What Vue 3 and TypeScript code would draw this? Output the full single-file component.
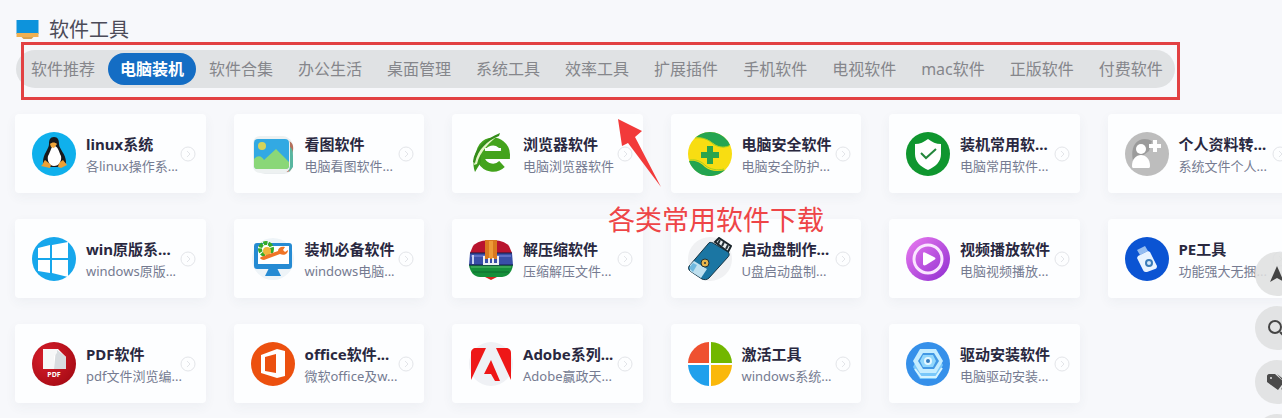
<script setup lang="ts">
import { ref } from 'vue'

interface Tool {
  icon: string
  title: string
  desc: string
}

const tabs: string[] = [
  '软件推荐', '电脑装机', '软件合集', '办公生活', '桌面管理', '系统工具', '效率工具',
  '扩展插件', '手机软件', '电视软件', 'mac软件', '正版软件', '付费软件',
]
const active = ref('电脑装机')

const tools: Tool[] = [
  { icon: 'linux', title: 'linux系统', desc: '各linux操作系...' },
  { icon: 'photo', title: '看图软件', desc: '电脑看图软件...' },
  { icon: 'browser', title: '浏览器软件', desc: '电脑浏览器软件' },
  { icon: 'safe', title: '电脑安全软件', desc: '电脑安全防护...' },
  { icon: 'shield', title: '装机常用软...', desc: '电脑常用软件...' },
  { icon: 'user', title: '个人资料转...', desc: '系统文件个人...' },
  { icon: 'windows', title: 'win原版系...', desc: 'windows原版...' },
  { icon: 'repair', title: '装机必备软件', desc: 'windows电脑...' },
  { icon: 'rar', title: '解压缩软件', desc: '压缩解压文件...' },
  { icon: 'usb', title: '启动盘制作...', desc: 'U盘启动盘制...' },
  { icon: 'video', title: '视频播放软件', desc: '电脑视频播放...' },
  { icon: 'pe', title: 'PE工具', desc: '功能强大无捆...' },
  { icon: 'pdf', title: 'PDF软件', desc: 'pdf文件浏览编...' },
  { icon: 'office', title: 'office软件...', desc: '微软office及w...' },
  { icon: 'adobe', title: 'Adobe系列...', desc: 'Adobe赢政天...' },
  { icon: 'activate', title: '激活工具', desc: 'windows系统...' },
  { icon: 'driver', title: '驱动安装软件', desc: '电脑驱动安装...' },
]
</script>

<template>
  <main class="page">
    <h1 class="heading">
      <svg class="heading-icon" viewBox="0 0 24 22" aria-hidden="true">
        <path d="M1 1h22v14H1z" fill="#0d93dc" />
        <path d="M1 14h22v4H1z" fill="#f0b052" />
        <path d="M6 18h12l-2 2H8z" fill="#d9a04d" />
      </svg>
      <span>软件工具</span>
    </h1>

    <nav class="tabs" aria-label="软件分类">
      <button
        v-for="tab in tabs"
        :key="tab"
        type="button"
        class="tab"
        :class="{ active: tab === active }"
        @click="active = tab"
      >{{ tab }}</button>
      <span class="frame" aria-hidden="true"></span>
    </nav>

    <section class="grid">
      <a v-for="tool in tools" :key="tool.title" href="#" class="card">
        <svg class="icon" viewBox="0 0 44 44" aria-hidden="true">
          <template v-if="tool.icon === 'linux'">
            <circle cx="22" cy="22" r="22" fill="#0fb0ec" />
            <path d="M22 5c-4 0-5 3-5 7 0 5-6 10-6 18 0 4 4 5 11 5s12-1 12-5c0-8-7-13-7-18 0-4-1-7-5-7z" fill="#17191d" />
            <path d="M22 14c-3 0-3 5-6 10-1 4 1 10 6 10s8-5 7-10c-2-4-3-10-7-10z" fill="#fff" />
            <path d="M18 12c2-2 5-2 7 0l-3 4-3-1z" fill="#f0a53a" />
            <path d="M13 28l6 5-1 3-9-2c2-1 2-4 4-6zM31 28l4 5-6 3-3-1 1-4z" fill="#eda035" />
          </template>
          <template v-else-if="tool.icon === 'photo'">
            <rect x="5" y="5" width="37" height="37" rx="9" fill="#e9edef" />
            <path d="M38 9c5 2 5 8 3 13v12c0 4-3 6-6 6z" fill="#b4705c" />
            <path d="M39 15c3 2 3 6 3 12v8l-4 5z" fill="#58b6a0" />
            <rect x="2" y="4" width="37" height="37" rx="7" fill="#edf1f1" />
            <rect x="3" y="7" width="35" height="30" rx="4" fill="#32a9e3" />
            <circle cx="11" cy="14" r="4" fill="#d6d45a" />
            <path d="M3 27c5-5 8-2 10 1L25 17l13 13v4a3 3 0 0 1-3 3H6a3 3 0 0 1-3-3z" fill="#8ad778" />
          </template>
          <template v-else-if="tool.icon === 'browser'">
            <path d="M12 23h25a13 13 0 1 0-4 9" fill="none" stroke="#43a31c" stroke-width="8" />
            <path d="M12 30l-6 10C3 32 4 22 12 14z" fill="#3b991b" />
            <path d="M5 33C7 18 17 8 31 2 21 10 11 19 8 32z" fill="#e3f6c4" />
            <path d="M4 30C5 17 16 7 31 1l-1 3C18 9 9 17 6 31z" fill="#348c1a" />
            <path d="M16 16h16v2H16z" fill="#fdfeff" />
          </template>
          <template v-else-if="tool.icon === 'safe'">
            <circle cx="22" cy="22" r="22" fill="#f8dd12" />
            <path d="M8 5A22 22 0 0 1 42 13c-6 4-12 2-17-2C20 7 14 6 8 5z" fill="#25a552" />
            <path d="M1 29c7-1 12 2 16 6 5 4 12 5 20 3A22 22 0 0 1 1 29z" fill="#23a450" />
            <path d="M7 6c7-1 13 1 18 6 5 3 10 4 16 2M2 28c7-1 12 2 16 6 4 3 11 5 18 3" fill="none" stroke="#a6cf20" stroke-width="1" />
            <path d="M19 14h6v6h6v6h-6v6h-6v-6h-6v-6h6z" fill="#28a44d" />
          </template>
          <template v-else-if="tool.icon === 'shield'">
            <circle cx="22" cy="22" r="22" fill="#0f962f" />
            <path d="M22 7c4 3 8 5 13 5v10c0 8-6 13-13 16C15 35 9 30 9 22V12c5 0 9-2 13-5z" fill="#fff" />
            <path d="M15 21l5 5 10-9" fill="none" stroke="#23863b" stroke-width="2" />
          </template>
          <template v-else-if="tool.icon === 'user'">
            <circle cx="22" cy="22" r="22" fill="#bdbdbd" />
            <path d="M10 12c4-6 12-6 17-3l-3 10-8 6-7 8c-2-7-3-15 1-21z" fill="#9b9b9b" />
            <circle cx="16" cy="17" r="5" fill="#fff" />
            <path d="M7 34c0-7 4-11 9-11s9 4 9 11c0 2-1 2-2 2H9c-1 0-2 0-2-2z" fill="#fff" />
            <path d="M28 8h4v4h4v4h-4v4h-4v-4h-4v-4h4z" fill="#fff" />
          </template>
          <template v-else-if="tool.icon === 'windows'">
            <circle cx="22" cy="22" r="22" fill="#17a7ec" />
            <path d="M6 11l12-3v13H6zM20 8l16-3v16H20zM6 23h12v13L6 34zM20 23h16v17l-16-4z" fill="#fff" />
          </template>
          <template v-else-if="tool.icon === 'repair'">
            <circle cx="22" cy="22" r="21" fill="#eef4f8" />
            <rect x="3" y="6" width="38" height="26" rx="3" fill="#268bd3" />
            <path d="M7 9h31v18H7z" fill="#fff" />
            <path d="M18 31h8l4 8H14z" fill="#268bd3" />
            <circle cx="15" cy="12" r="6" fill="#fff" stroke="#35aa28" stroke-width="4" stroke-dasharray="4 1" />
            <circle cx="16" cy="14" r="4" fill="#efb63b" />
            <path d="M10 20l17-6c0-3 3-5 7-4l-2 3 2 2 3-2c0 4-4 6-8 4l-16 6c-3 0-5-2-3-3z" fill="#ef7426" />
          </template>
          <template v-else-if="tool.icon === 'rar'">
            <path d="M4 9C10 1 34 1 40 9l3 7H1z" fill="#b9142e" />
            <path d="M1 16h42l1 12H0z" fill="#394fa7" />
            <path d="M0 28h44c-1 7-5 12-11 12H11C5 40 1 35 0 28z" fill="#15903a" />
            <path d="M1 16h42M0 28h44" stroke="#141b45" stroke-width="1" />
            <path d="M4 35h36" stroke="#0d6b2c" stroke-width="1" />
            <path d="M2 19h40" stroke="#8390e0" />
            <path d="M2 30h40" stroke="#5cbb6e" />
            <path d="M16 3h12v19H16z" fill="#d9791f" />
            <path d="M20 4h4v17h-4z" fill="#ed9b37" />
            <path d="M15 19v8h14v-8M20 21v5M24 21v5" fill="none" stroke="#eceff3" stroke-width="2" />
            <path d="M16 40h12l-6 3z" fill="#d3261e" />
            <path d="M3 18h2v9H3z" fill="#c7d0ef" />
          </template>
          <template v-else-if="tool.icon === 'usb'">
            <circle cx="22" cy="22" r="22" fill="#f0f1f3" />
            <path d="M27 5l4-4 12 8-3 6z" fill="#eaf0f2" stroke="#1a252b" stroke-width="2" />
            <path d="M32 3l-2 4M36 5l-2 4M40 8l-2 4" stroke="#263238" stroke-width="2" />
            <path d="M25 6l15 9c2 2 1 4 0 5L21 41c-2 2-5 2-7 1L2 34c-2-2-2-4 0-6L20 7c1-2 3-2 5-1z" fill="#1b76a3" stroke="#163342" />
            <path d="M2 28l4-4 13 8-6 9L2 34z" fill="#bfe0ef" />
            <path d="M1 31l4-5 4 2-4 7z" fill="#6eb8df" />
            <circle cx="17" cy="26" r="4" fill="#e7b64b" stroke="#243238" />
            <circle cx="17" cy="26" r="1" fill="#243238" />
          </template>
          <template v-else-if="tool.icon === 'video'">
            <defs>
              <linearGradient id="video-fill" x1="0" y1="0" x2="1" y2="1">
                <stop offset="0" stop-color="#eb7cf0" />
                <stop offset="1" stop-color="#8e2cd0" />
              </linearGradient>
            </defs>
            <circle cx="22" cy="22" r="22" fill="url(#video-fill)" />
            <circle cx="22" cy="22" r="14" fill="none" stroke="#fae5ff" stroke-width="3" />
            <path d="M17 17c0-2 1-2 3-1l8 4c2 1 2 2 0 3l-8 5c-2 1-3 0-3-1z" fill="#fff" />
          </template>
          <template v-else-if="tool.icon === 'pe'">
            <circle cx="22" cy="22" r="22" fill="#0b54d3" />
            <path d="M12 13l8-4 3 5-8 4z" fill="#94bcf0" />
            <path d="M13 19l10-5 2 1 7 14c0 2-1 3-2 3l-8 3c-2 0-3 0-4-2l-6-12z" fill="#e8f3ff" />
            <circle cx="24" cy="26" r="3" fill="#d3e7fb" stroke="#397bb8" stroke-width="2" />
          </template>
          <template v-else-if="tool.icon === 'pdf'">
            <defs>
              <radialGradient id="pdf-fill" cx=".35" cy=".35" r=".7">
                <stop offset="0" stop-color="#d91e2b" />
                <stop offset="1" stop-color="#a90c16" />
              </radialGradient>
            </defs>
            <circle cx="22" cy="22" r="22" fill="url(#pdf-fill)" />
            <path d="M11 7h15l8 8v12H11z" fill="#fff" />
            <path d="M24 7l10 8v12H22z" fill="#d8dce0" />
            <path d="M11 7h14v4l-3 3v13H11z" fill="#f6f7f8" />
            <text x="22" y="35" text-anchor="middle" class="pdf-label">PDF</text>
          </template>
          <template v-else-if="tool.icon === 'office'">
            <circle cx="22" cy="22" r="22" fill="#ec500f" />
            <path d="M10 13l16-6 8 2v25l-8 2-16-5zM14 15v14l11 2V12z" fill="#fff" fill-rule="evenodd" />
          </template>
          <template v-else-if="tool.icon === 'adobe'">
            <circle cx="22" cy="22" r="22" fill="#eff1f5" />
            <path d="M7 6h10L2 38V11c0-3 2-5 5-5zM27 6h10c3 0 5 2 5 5v27zM22 18l9 21h-5l-4-7h-7z" fill="#ee1717" />
          </template>
          <template v-else-if="tool.icon === 'activate'">
            <path d="M21 21H0A22 22 0 0 1 21 0z" fill="#ef5130" />
            <path d="M23 21V0a22 22 0 0 1 21 21z" fill="#72b700" />
            <path d="M21 23v21A22 22 0 0 1 0 23z" fill="#20a0ec" />
            <path d="M23 23h21a22 22 0 0 1-21 21z" fill="#fab80b" />
          </template>
          <template v-else>
            <circle cx="22" cy="22" r="22" fill="#3590ea" />
            <path d="M14 11h16l7 12-7 14H14L7 25z" fill="#79c8fa" />
            <path d="M9 27l6 8h15l6-9" fill="none" stroke="#d6f4ff" stroke-width="2" />
            <path d="M14 7h16l7 12-7 12H14L7 19z" fill="#c5edff" />
            <path d="M17 11h11l5 8-5 8H17l-5-8z" fill="#4299e5" />
            <path d="M17 13h10l3 6-3 6H17l-3-6z" fill="#91d7fc" />
            <circle cx="22" cy="19" r="4" fill="#e4f8ff" />
            <circle cx="22" cy="19" r="2" fill="#347dbf" />
          </template>
        </svg>
        <span class="text">
          <strong class="title">{{ tool.title }}</strong>
          <span class="desc">{{ tool.desc }}</span>
        </span>
        <svg class="go" viewBox="0 0 16 16" aria-hidden="true">
          <circle cx="8" cy="8" r="7" />
          <path d="M7 5l3 3-3 3" />
        </svg>
      </a>
    </section>

    <svg class="arrow" viewBox="0 0 44 68" aria-hidden="true">
      <path d="M0 0l24 12-7 6 26 50L10 24l-6 3z" fill="#f23a3a" />
    </svg>
    <p class="note">各类常用软件下载</p>

    <aside class="side">
      <button type="button" class="round" aria-label="导航">
        <svg viewBox="0 0 20 20"><path d="M10 2l7 16-7-4-7 4z" fill="#444" /></svg>
      </button>
      <button type="button" class="round" aria-label="搜索">
        <svg viewBox="0 0 20 20"><circle cx="8" cy="9" r="6" fill="none" stroke="#444" stroke-width="2" /><path d="M13 14l5 5" stroke="#444" stroke-width="2" /></svg>
      </button>
      <button type="button" class="round" aria-label="标签">
        <svg viewBox="0 0 20 20"><path d="M0 4c0-1 1-2 2-2h6l9 8-6 8-11-8zM10 2l10 8-6 8 3-8z" fill="#4a4a4a" /><circle cx="4" cy="6" r="1" fill="#e3e3e4" /></svg>
      </button>
      <button type="button" class="round" aria-label="更多"></button>
    </aside>
  </main>
</template>

<style>
body {
  background: #f7f8fb;
}
</style>

<style scoped>
.page {
  position: relative;
  min-height: 100vh;
  padding: 16px 0 0 15px;
  box-sizing: border-box;
  overflow: hidden;
  font-family: "Noto Sans", "Noto Sans CJK SC", sans-serif;
}
.heading {
  display: flex;
  align-items: center;
  gap: 9px;
  height: 28px;
  margin: 0 0 6px;
  font-size: 20px;
  line-height: 28px;
  font-weight: 400;
  color: #4c4b58;
}
.heading-icon {
  width: 25px;
  height: 22px;
}
.tabs {
  position: relative;
  display: flex;
  gap: 1px;
  width: fit-content;
  margin: 0 0 26px 1px;
  padding: 3px 0 3px 3px;
  border-radius: 19px;
  background: #e0e2e4;
}
.tab {
  height: 32px;
  padding: 0 12px;
  border: 0;
  border-radius: 16px;
  background: transparent;
  color: #85868b;
  font-family: inherit;
  font-size: 16px;
  line-height: 32px;
  white-space: nowrap;
}
.tab.active {
  background: #146dc4;
  color: #fff;
  font-weight: 700;
}
.frame {
  position: absolute;
  inset: -8px -5px -12px 5px;
  border: 3px solid #e24143;
  pointer-events: none;
}
.grid {
  display: grid;
  grid-template-columns: repeat(6, minmax(0, 1fr));
  gap: 26px 28px;
  margin-right: -16px;
}
.card {
  display: flex;
  align-items: center;
  gap: 10px;
  min-height: 79px;
  padding: 0 10px 0 17px;
  box-sizing: border-box;
  border-radius: 4px;
  background: #fdfeff;
  box-shadow: 0 4px 12px rgba(60, 70, 90, 0.05);
  color: inherit;
  text-decoration: none;
}
.icon {
  flex: none;
  width: 44px;
  height: 44px;
}
.pdf-label {
  fill: #fff;
  font-size: 7px;
  font-weight: 700;
}
.text {
  display: flex;
  flex: 1;
  flex-direction: column;
  min-width: 0;
  padding-top: 2px;
  white-space: nowrap;
}
.title {
  font-size: 15px;
  line-height: 22px;
  font-weight: 700;
  color: #29283f;
}
.desc {
  font-size: 13px;
  line-height: 22px;
  color: #757b91;
}
.go {
  flex: none;
  width: 16px;
  height: 16px;
  margin-left: -10px;
  fill: none;
  stroke: #e3e5e9;
  stroke-width: 1;
}
.arrow {
  position: absolute;
  top: 119px;
  left: 618px;
  width: 44px;
  height: 68px;
}
.note {
  position: absolute;
  top: 201px;
  left: 608px;
  margin: 0;
  font-size: 27px;
  line-height: 38px;
  color: #ee4547;
  white-space: nowrap;
}
.side {
  position: absolute;
  top: 252px;
  right: -17px;
  display: flex;
  flex-direction: column;
  gap: 10px;
}
.round {
  display: grid;
  place-items: center;
  width: 44px;
  height: 44px;
  padding: 0;
  border: 0;
  border-radius: 50%;
  background: rgba(222, 223, 224, 0.86);
}
.round svg {
  width: 20px;
  height: 20px;
}
</style>
